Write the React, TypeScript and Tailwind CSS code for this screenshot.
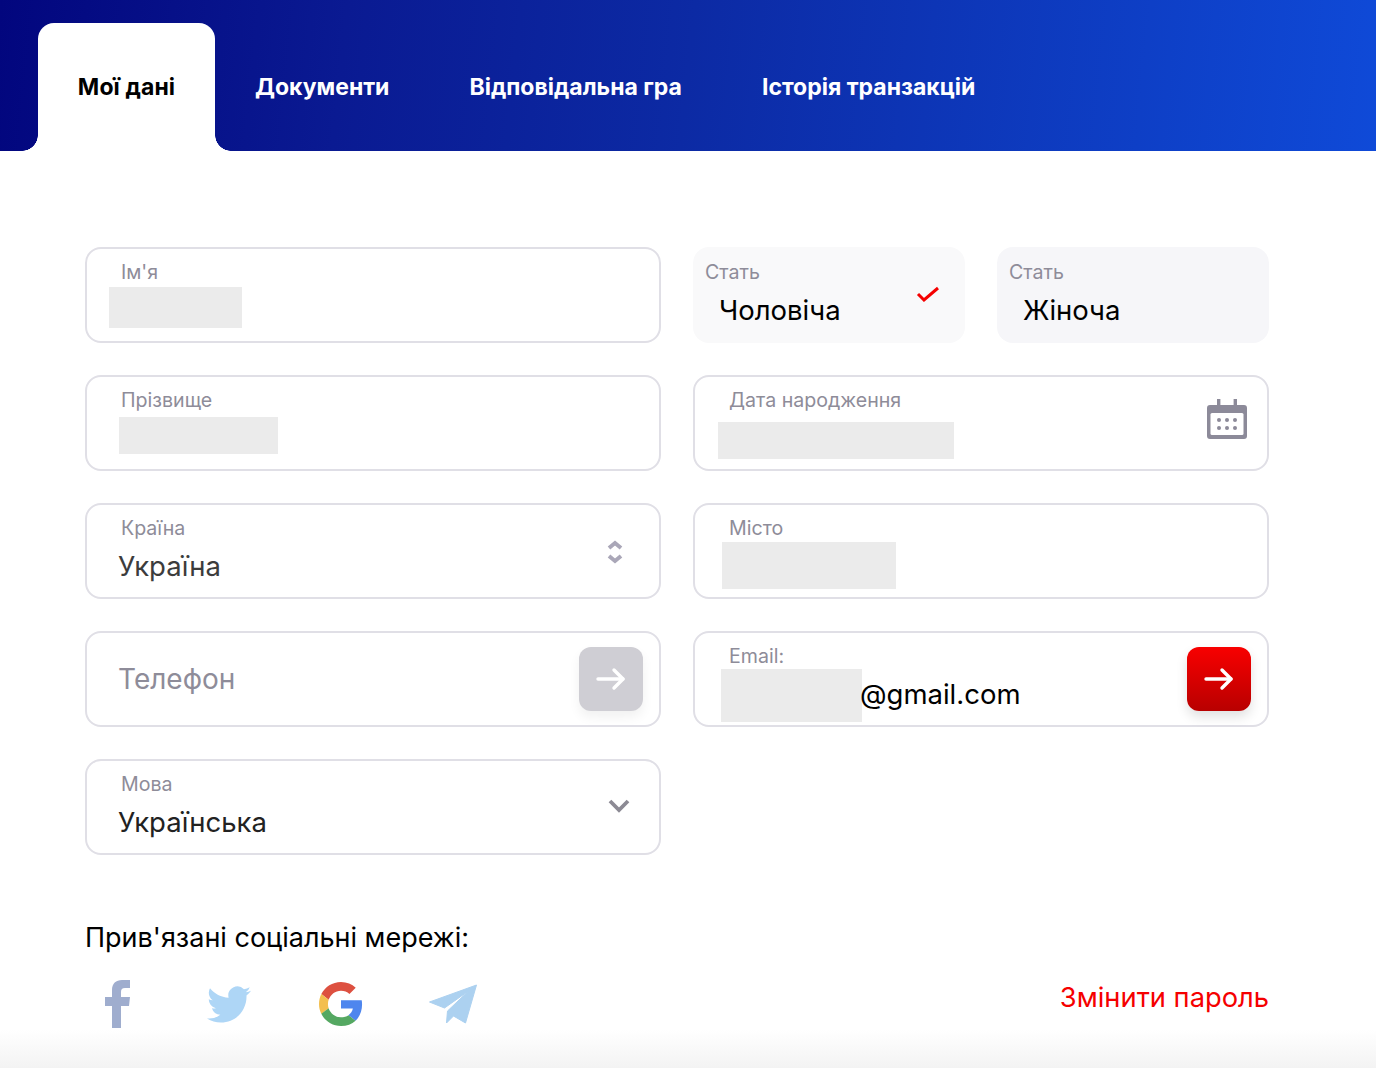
import type { ReactNode } from "react";

const tabs = ["Документи", "Відповідальна гра", "Історія транзакцій"];

function Arrow() {
  return (
    <svg width="30" height="24" viewBox="0 0 30 24" fill="none" stroke="white" strokeWidth="3.4" strokeLinecap="round" strokeLinejoin="round">
      <path d="M2 12H27" />
      <path d="M18 3l9 9-9 9" />
    </svg>
  );
}

function Field({ label, labelClass = "ml-[34px]", children }: { label: string; labelClass?: string; children?: ReactNode }) {
  return (
    <div className="relative h-24 rounded-2xl border-2 border-[#e0dfe6] bg-white overflow-hidden">
      <div className={`mt-[12px] text-[19.6px] leading-[22px] text-[#8e8c99] ${labelClass}`}>{label}</div>
      {children}
    </div>
  );
}

function GenderCard({ value, bg, checked }: { value: string; bg: string; checked?: boolean }) {
  return (
    <div className={`relative h-24 flex-1 rounded-2xl ${bg}`}>
      <div className="ml-3 pt-[14px] text-[19.6px] leading-[22px] text-[#8e8c99]">Стать</div>
      <div className="ml-[26px] mt-[9px] text-[27.5px] leading-[36px] text-black">{value}</div>
      {checked && (
        <svg className="absolute right-[25px] top-[39px]" width="24" height="16" viewBox="0 0 24 16" fill="none" stroke="#f50000" strokeWidth="3">
          <path d="M2 8l6 6L22 2" />
        </svg>
      )}
    </div>
  );
}

function Blank({ className }: { className: string }) {
  return <div className={`bg-[#ebebeb] ${className}`} />;
}

export default function App() {
  return (
    <div className="relative h-[1068px] overflow-hidden bg-white font-['Inter',sans-serif]">
      <header className="flex h-[151px] items-end bg-[linear-gradient(96deg,#02067e_0%,#0a1a92_25%,#0c2aa4_50%,#0f4ad8_100%)] pl-[38px]">
        <div className="relative flex h-32 w-[177px] items-center justify-center rounded-t-2xl bg-white text-[23px] font-bold tracking-[0.1px] text-black">
          <span>Мої дані</span>
          <span className="absolute bottom-0 -left-4 h-4 w-4 bg-[radial-gradient(circle_at_0_0,transparent_15.5px,white_16px)]" />
          <span className="absolute bottom-0 -right-4 h-4 w-4 bg-[radial-gradient(circle_at_100%_0,transparent_15.5px,white_16px)]" />
        </div>
        {tabs.map((tab) => (
          <div key={tab} className="flex h-32 items-center px-10 text-[23px] font-bold text-white whitespace-nowrap">
            <span>{tab}</span>
          </div>
        ))}
      </header>

      <main className="mx-[85px] mt-[96px] w-[1184px]">
        <div className="grid grid-cols-2 gap-8">
          <Field label="Ім'я">
            <Blank className="ml-[22px] mt-[4px] h-[41px] w-[133px]" />
          </Field>
          <div className="flex gap-8">
            <GenderCard value="Чоловіча" bg="bg-[#f9f9fa]" checked />
            <GenderCard value="Жіноча" bg="bg-[#f6f6f9]" />
          </div>

          <Field label="Прізвище">
            <Blank className="ml-[32px] mt-[6px] h-[37px] w-[159px]" />
          </Field>
          <Field label="Дата народження">
            <Blank className="ml-[23px] mt-[11px] h-[37px] w-[236px]" />
            <svg className="absolute right-[20px] top-[22px]" width="40" height="40" viewBox="0 0 40 40" fill="#8c8a99">
              <path d="M3 6h7V0h3.4v6h13.2V0H30v6h7a3 3 0 013 3v28a3 3 0 01-3 3H3a3 3 0 01-3-3V9a3 3 0 013-3z" />
              <rect x="3.5" y="14" width="33" height="22" rx="1.5" fill="white" />
              <g>
                <circle cx="12" cy="21" r="2" />
                <circle cx="20" cy="21" r="2" />
                <circle cx="28" cy="21" r="2" />
                <circle cx="12" cy="29" r="2" />
                <circle cx="20" cy="29" r="2" />
                <circle cx="28" cy="29" r="2" />
              </g>
            </svg>
          </Field>

          <Field label="Країна">
            <div className="ml-8 mt-[9px] -translate-x-px text-[27.5px] leading-[36px] text-[#3c3c3c]">Україна</div>
            <svg className="absolute right-[36px] top-[34px]" width="16" height="26" viewBox="0 0 16 26" fill="none" stroke="#aaa7b8" strokeWidth="4">
              <path d="M2 9l6-5 6 5" />
              <path d="M2 17l6 5 6-5" />
            </svg>
          </Field>
          <Field label="Місто">
            <Blank className="ml-[27px] mt-[3px] h-[47px] w-[174px]" />
          </Field>

          <div className="flex h-24 items-center justify-between rounded-2xl border-2 border-[#e0dfe6] pl-[31px] pr-4">
            <span className="text-[28px] text-[#8e8c99]">Телефон</span>
            <button className="flex h-16 w-16 items-center justify-center rounded-xl bg-[#cfced4] shadow-[0_6px_12px_rgba(0,0,0,0.06)]">
              <Arrow />
            </button>
          </div>
          <div className="relative h-24 rounded-2xl border-2 border-[#e0dfe6]">
            <div className="ml-[34px] mt-[12px] text-[19.6px] leading-[22px] text-[#8e8c99]">Email:</div>
            <div className="ml-[26px] mt-[2px] flex items-end">
              <Blank className="h-[53px] w-[141px]" />
              <span className="-ml-[2px] mb-[10px] text-[27.5px] leading-[36px] text-black">@gmail.com</span>
            </div>
            <button className="absolute right-4 top-[14px] flex h-16 w-16 items-center justify-center rounded-xl bg-[linear-gradient(180deg,#f80000_0%,#b80000_100%)] shadow-[0_6px_12px_rgba(0,0,0,0.12)]">
              <Arrow />
            </button>
          </div>

          <Field label="Мова">
            <div className="ml-8 mt-[9px] -translate-x-px text-[27.5px] leading-[36px] text-[#222]">Українська</div>
            <svg className="absolute right-[29px] top-[38px]" width="22" height="15" viewBox="0 0 22 15" fill="none" stroke="#8c8a94" strokeWidth="3.8">
              <path d="M2 2l9 9 9-9" />
            </svg>
          </Field>
        </div>

        <div className="mt-[63px] text-[27px] leading-[40px] text-black">Прив'язані соціальні мережі:</div>
        <div className="mt-[22px] flex items-center justify-between">
          <div className="flex items-center">
            <svg className="ml-5" width="25" height="48" viewBox="0 0 25 48" fill="#9fadce">
              <path d="M7 48V26H0v-9h7v-7C7 3.5 11 0 17 0h8v8h-5c-3 0-4 1.5-4 4v5h9l-1 9h-8v22z" />
            </svg>
            <svg className="ml-[77px]" width="44" height="37" viewBox="0 0 24 20" fill="#aed6f6" preserveAspectRatio="none">
              <path transform="translate(0 -2)" d="M23.953 4.57a10 10 0 01-2.825.775 4.958 4.958 0 002.163-2.723c-.951.555-2.005.959-3.127 1.184a4.92 4.92 0 00-8.384 4.482C7.69 8.095 4.067 6.13 1.64 3.162a4.822 4.822 0 00-.666 2.475c0 1.71.87 3.213 2.188 4.096a4.904 4.904 0 01-2.228-.616v.06a4.923 4.923 0 003.946 4.827 4.996 4.996 0 01-2.212.085 4.936 4.936 0 004.604 3.417 9.867 9.867 0 01-6.102 2.105c-.39 0-.779-.023-1.17-.067a13.995 13.995 0 007.557 2.209c9.053 0 13.998-7.496 13.998-13.985 0-.21 0-.42-.015-.63A9.935 9.935 0 0024 4.59z" />
            </svg>
            <svg className="ml-[68px]" width="44" height="44" viewBox="0 0 48 48">
              <path fill="#dd5040" d="M24 9.5c3.54 0 6.71 1.22 9.21 3.6l6.85-6.85C35.9 2.38 30.47 0 24 0 14.62 0 6.51 5.38 2.56 13.22l7.98 6.19C12.43 13.72 17.74 9.5 24 9.5z" />
              <path fill="#4e86ee" d="M46.98 24.55c0-1.57-.15-3.09-.38-4.55H24v9.02h12.94c-.58 2.96-2.26 5.48-4.78 7.18l7.73 6c4.51-4.18 7.09-10.36 7.09-17.65z" />
              <path fill="#f3bf4f" d="M10.53 28.59c-.48-1.45-.76-2.99-.76-4.59s.27-3.14.76-4.59l-7.98-6.19C.92 16.46 0 20.12 0 24c0 3.88.92 7.54 2.56 10.78l7.97-6.19z" />
              <path fill="#55a862" d="M24 48c6.48 0 11.93-2.13 15.89-5.81l-7.73-6c-2.15 1.45-4.92 2.3-8.16 2.3-6.26 0-11.57-4.22-13.47-9.91l-7.98 6.19C6.51 42.62 14.62 48 24 48z" />
            </svg>
            <svg className="ml-[65px]" width="50" height="40" viewBox="0 0 49 40" fill="#acd1f0" stroke="#acd1f0" strokeWidth="1" strokeLinejoin="round">
              <path d="M48 1L1 18l15 6L40 7 19 27l-1 12 7-7 12 7z" />
            </svg>
          </div>
          <a className="-mt-[12px] text-[27.3px] text-[#f50000]">Змінити пароль</a>
        </div>
      </main>

      <div className="absolute bottom-0 left-0 right-0 h-[38px] bg-[linear-gradient(180deg,#ffffff_0%,#f3f3f3_100%)]" />
    </div>
  );
}
